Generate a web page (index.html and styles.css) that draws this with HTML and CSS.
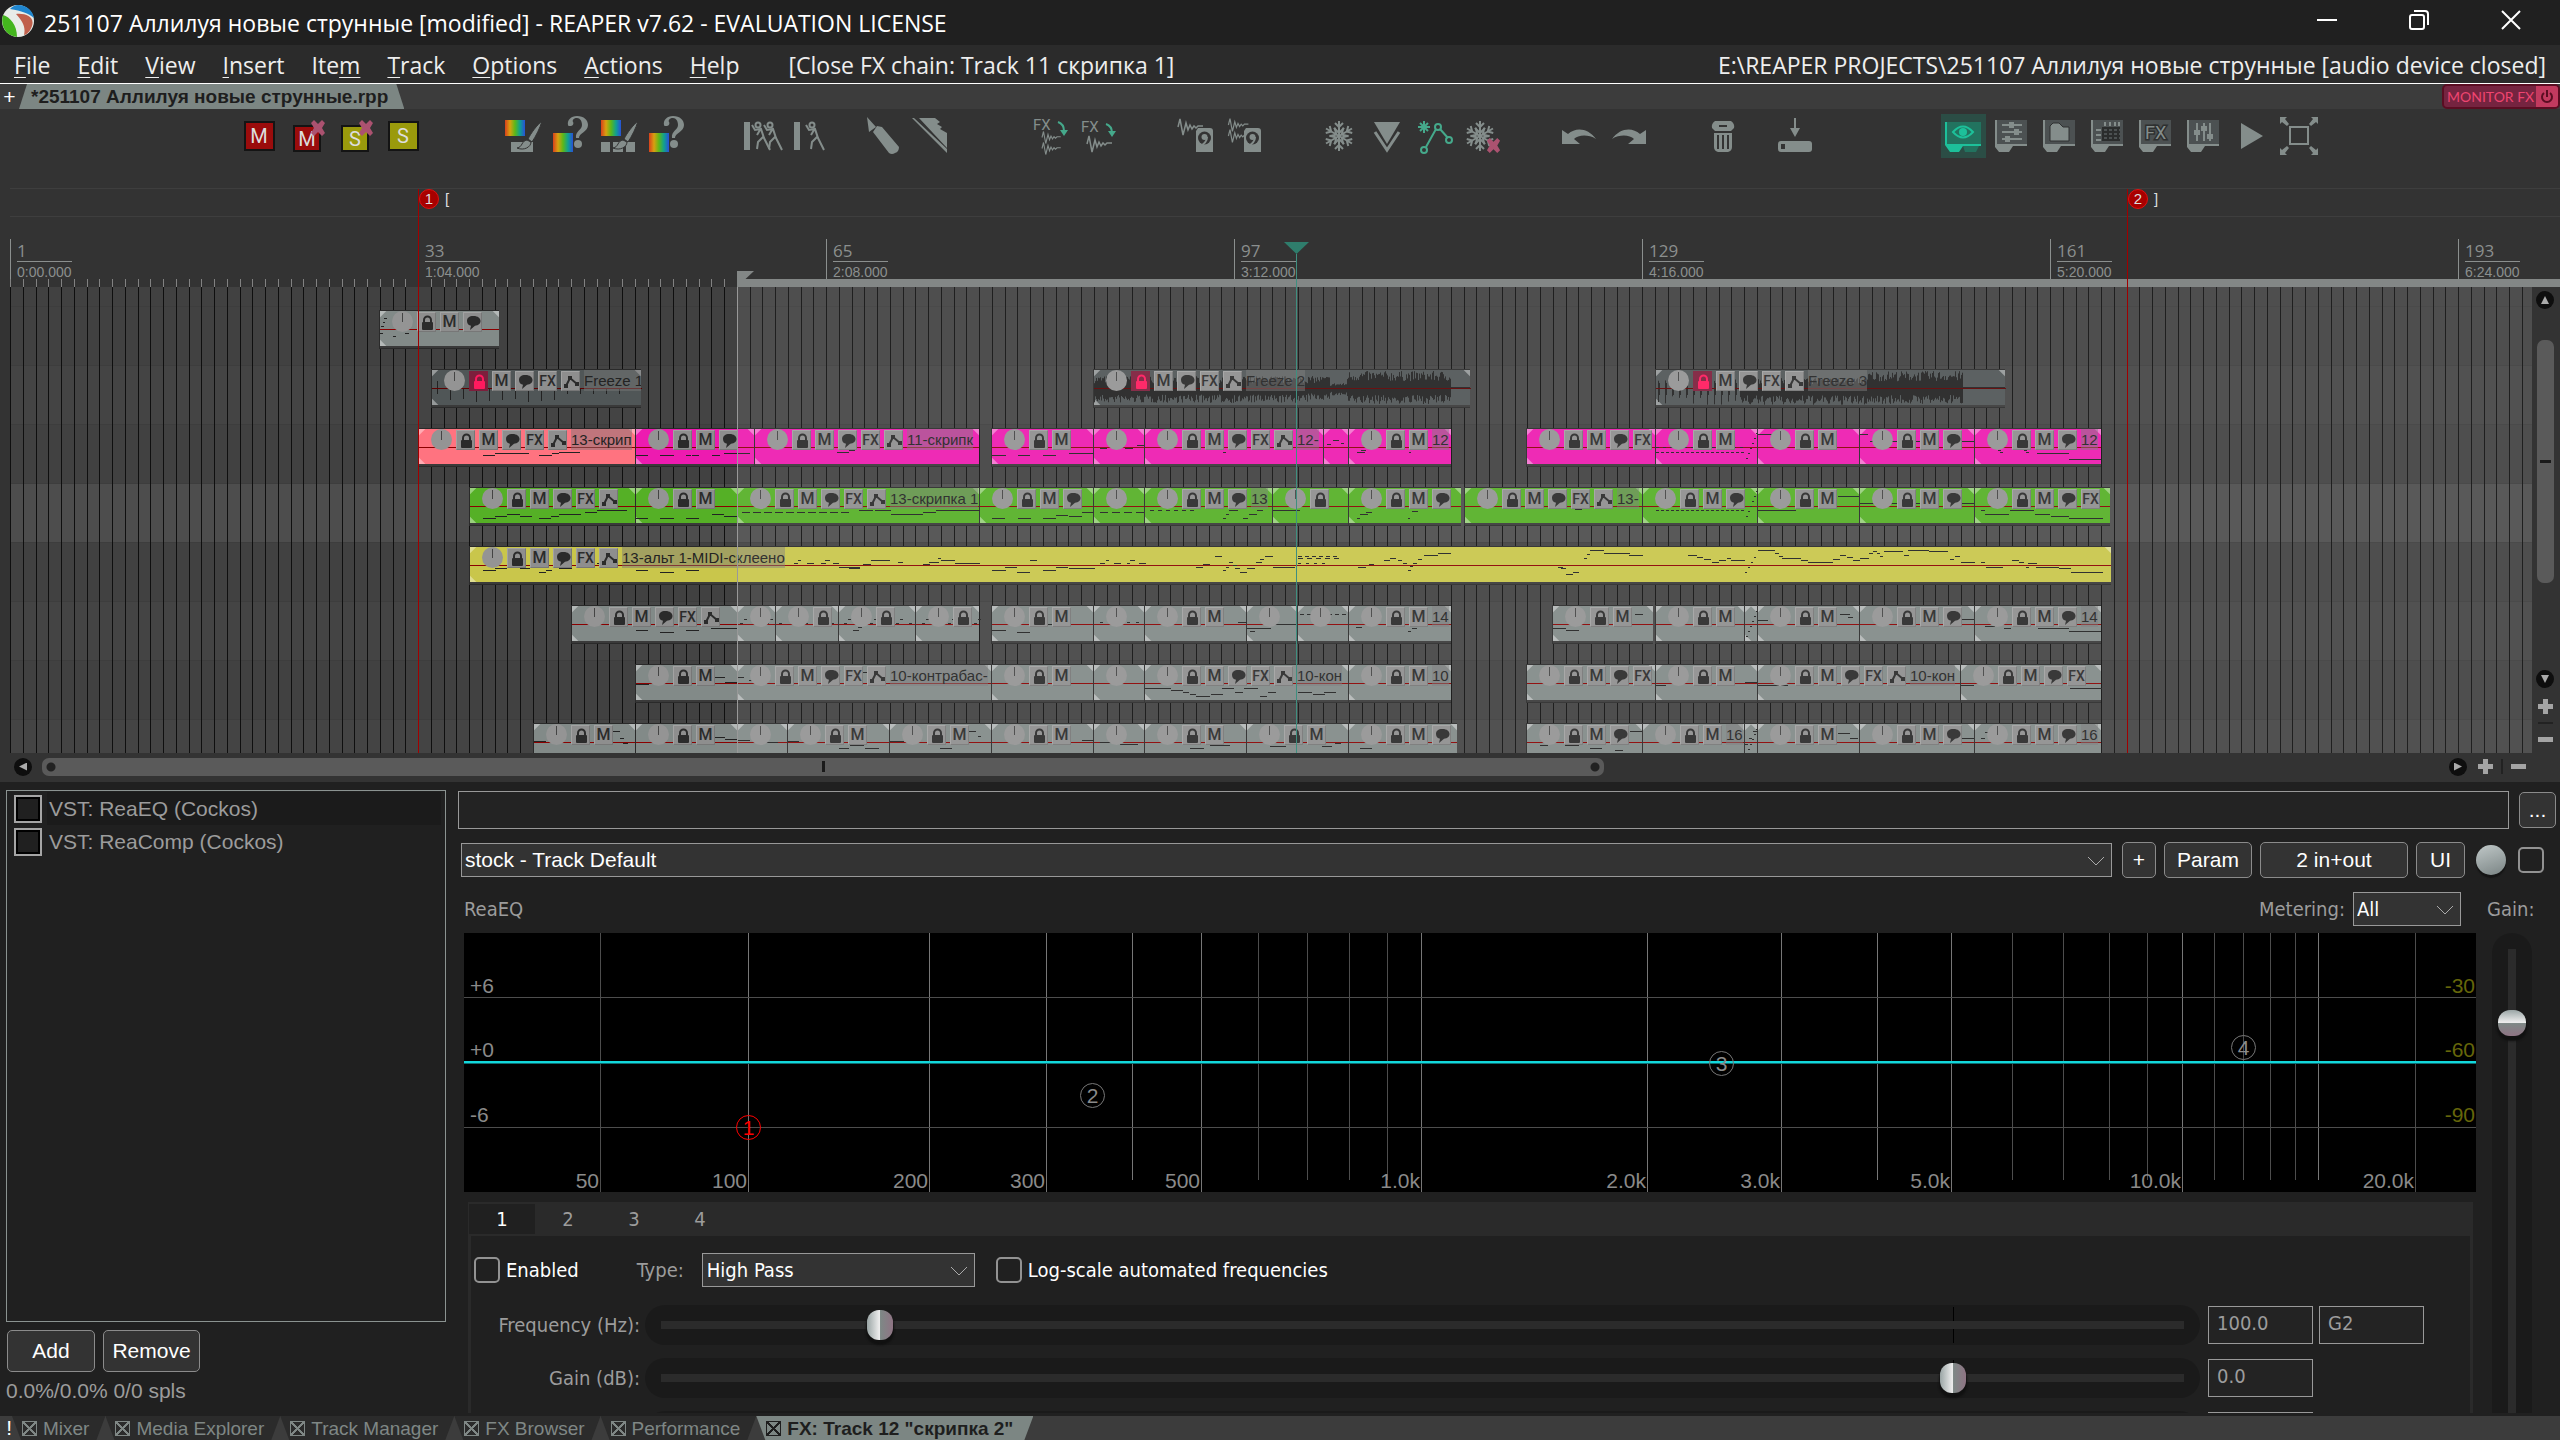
FILE: index.html
```html
<!DOCTYPE html>
<html lang="en">
<head>
<meta charset="utf-8">
<title>251107 Аллилуя новые струнные [modified] - REAPER v7.62 - EVALUATION LICENSE</title>
<link rel="stylesheet" href="styles.css">
</head>
<body>
<svg class="defs" aria-hidden="true">
  <defs>
    <linearGradient id="rainbow"><stop offset="0" stop-color="#d8401c"/><stop offset=".25" stop-color="#d8a010"/><stop offset=".5" stop-color="#5cb818"/><stop offset=".75" stop-color="#10a090"/><stop offset="1" stop-color="#2850d8"/></linearGradient>
    <symbol id="lock" viewBox="0 0 19 20"><path d="M6 9V7a3.500 3.500 0 0 1 7 0v2" fill="none" stroke="currentColor" stroke-width="2"/><rect x="4" y="9" width="11" height="8" rx="1" fill="currentColor"/></symbol>
    <symbol id="bubble" viewBox="0 0 19 20"><path d="M9.500 3C5 3 3 5 3 8s2 4.500 4 4.800L6 17l5-4.200c3-.3 5.500-2 5.500-4.800S14 3 9.500 3z" fill="currentColor"/></symbol>
    <symbol id="env" viewBox="0 0 19 20"><path d="M4 14L8 6l7 6" fill="none" stroke="currentColor" stroke-width="2"/><rect x="2" y="12" width="4" height="4" fill="currentColor"/><rect x="6" y="4" width="4" height="4" fill="currentColor"/><rect x="13" y="10" width="4" height="4" fill="currentColor"/></symbol>
    <symbol id="brush" viewBox="0 0 48 48"><path d="M43 9c-5 4-11 12-14 18l4 3c4-6 8-14 10-21z"/><path d="M28 28c-6 1-4 7-10 8 7 3 14-1 14-6z"/></symbol>
    <symbol id="snow" viewBox="0 0 48 48"><g fill="none" stroke="currentColor" stroke-width="2"><g id="arm"><path d="M24 24V9M20 11l4 4 4-4M19 16l5 5 5-5"/></g><use href="#arm" transform="rotate(60 24 24)"/><use href="#arm" transform="rotate(120 24 24)"/><use href="#arm" transform="rotate(180 24 24)"/><use href="#arm" transform="rotate(240 24 24)"/><use href="#arm" transform="rotate(300 24 24)"/></g></symbol>
    <symbol id="walker" viewBox="0 0 20 30"><g fill="none" stroke="currentColor" stroke-width="2"><circle cx="7" cy="4" r="2.500"/><path d="M1 4l3 5 6-1 3 9 6 12M12 16l-5 5-1 7M9 9l-3 5"/></g></symbol>
    <symbol id="wave" viewBox="0 0 26 20"><path d="M1 10l2-8 3 16 3-12 2 7 2-5 2 4 2-3 2 2 2-2h5" fill="none" stroke="currentColor" stroke-width="1.500"/></symbol>
    <symbol id="disk" viewBox="0 0 18 24"><path d="M3 0h12a3 3 0 0 1 3 3v21H1V3z" fill="currentColor"/><circle cx="9.500" cy="10" r="6.500" fill="#333"/><circle cx="9.500" cy="9" r="3" fill="currentColor"/><path d="M12 9c0 5-4 8-8 10" stroke="currentColor" stroke-width="2" fill="none"/></symbol>
    <symbol id="card" viewBox="0 0 48 48"><path d="M8 8h32v24H8z" fill="#4c5152"/><path d="M8 8h2v24H8z"/><path d="M8 32h32v2H26l-4 6H12l-4-5z"/></symbol>
    <symbol id="x" viewBox="0 0 16 16"><path d="M1 3l3-3 4 4 4-4 3 3-3 5 3 5-3 3-4-4-4 4-3-3 3-5z" fill="#ab5270"/></symbol>
    <symbol id="ask" viewBox="0 0 48 48"><path d="M21 17c-1-5 3-9 9-9 7 0 11 4 11 9 0 7-9 8-9 13h-3c-1-7 6-8 6-13 0-4-2-7-5-7s-5 2-4 4c1 1 0 4-2 4s-3 0-3-1z"/><circle cx="31" cy="36" r="4"/></symbol>
  </defs>
</svg>

<header class="titlebar">
  <svg class="logo" viewBox="0 0 32 32"><circle cx="16" cy="16" r="16" fill="#e8ece8"/><path d="M16 0A16 16 0 0 1 32 13C26 8 20 6 8 4 11 1 13 0 16 0z" fill="#1f86cf"/><path d="M14 9c10-1 19 3 16 12-2 6-6 9-8 9 2-9-2-14-8-21z" fill="#c0604c"/><path d="M1 10C8 12 15 20 15 32 4 31-2 21 1 10z" fill="#44b51e"/></svg>
  <h1>251107 Аллилуя новые струнные [modified] - REAPER v7.62 - EVALUATION LICENSE</h1>
  <div class="winbtns">
    <button aria-label="Minimize"><svg viewBox="0 0 20 20"><path d="M0 10h20"/></svg></button>
    <button aria-label="Restore"><svg viewBox="0 0 20 20"><rect x="1" y="5" width="14" height="14" rx="2"/><path d="M5 1h11q3 0 3 3v11"/></svg></button>
    <button aria-label="Close"><svg viewBox="0 0 20 20"><path d="M1 1l18 18M19 1L1 19"/></svg></button>
  </div>
</header>

<nav class="menubar">
  <a href="#"><u>F</u>ile</a><a href="#"><u>E</u>dit</a><a href="#"><u>V</u>iew</a><a href="#"><u>I</u>nsert</a><a href="#">Ite<u>m</u></a><a href="#"><u>T</u>rack</a><a href="#"><u>O</u>ptions</a><a href="#"><u>A</u>ctions</a><a href="#"><u>H</u>elp</a>
  <span class="last-action">[Close FX chain: Track 11 скрипка 1]</span>
  <span class="path">E:\REAPER PROJECTS\251107 Аллилуя новые струнные [audio device closed]</span>
</nav>

<div class="projects">
  <button class="plus">+</button>
  <button class="project">*251107 Аллилуя новые струнные.rpp</button>
  <button class="monitor">MONITOR FX<span><svg viewBox="0 0 16 16"><path d="M5 4a5 5 0 1 0 6 0M8 1v7" fill="none" stroke="#5a0d22" stroke-width="2"/></svg></span></button>
</div>

<div class="toolbar">
  <div class="group">
    <button class="ms"><b class="red">M</b></button>
    <button class="ms"><b class="red small">M</b><svg class="cross"><use href="#x"/></svg></button>
    <button class="ms"><b class="yel small">S</b><svg class="cross"><use href="#x"/></svg></button>
    <button class="ms"><b class="yel">S</b></button>
  </div>
  <div class="group g72">
    <button aria-label="Color items"><svg viewBox="0 0 48 48"><path d="M6 8h20v16H6z" fill="url(#rainbow)"/><path d="M12 30h22v10H12z"/><use href="#brush" stroke="#333" stroke-width="1"/></svg></button>
    <button aria-label="Random item color"><svg viewBox="0 0 48 48"><path d="M6 21h20v19H6z" fill="url(#rainbow)"/><use href="#ask" y="-4" width="48" height="48"/></svg></button>
    <button aria-label="Color tracks"><svg viewBox="0 0 48 48"><path d="M6 8h20v16H6z" fill="url(#rainbow)"/><path d="M6 30h9v10H6zm12 0h10v10H18zm13 0h9v10h-9z"/><use href="#brush" stroke="#333" stroke-width="1"/></svg></button>
    <button aria-label="Random track color"><svg viewBox="0 0 48 48"><path d="M6 21h20v19H6z" fill="url(#rainbow)"/><use href="#ask" y="-4" width="48" height="48"/></svg></button>
  </div>
  <div class="group g48">
    <button aria-label="Nudge all"><svg viewBox="0 0 48 48"><path d="M5 10h6v28H5z"/><use href="#walker" x="11" y="9" width="22" height="30"/><use href="#walker" x="23" y="9" width="22" height="30"/></svg></button>
    <button aria-label="Nudge"><svg viewBox="0 0 48 48"><path d="M7 10h6v28H7z"/><use href="#walker" x="16" y="9" width="24" height="30"/></svg></button>
  </div>
  <div class="group g24">
    <button aria-label="Draw"><svg viewBox="0 0 48 48"><path d="M8 5l9 10-7 5zM18 14l5 1 17 20q0 5-4 6-3 2-6 0L14 20z"/></svg></button>
    <button aria-label="Fade"><svg viewBox="0 0 48 48"><path d="M7 6l33 31v4L5 6zM12 6h16l5 4-3 2 5 3-2 2 7 4v15z"/></svg></button>
  </div>
  <div class="group g72">
    <button><svg viewBox="0 0 48 48"><text x="6" y="18" class="fxt">FX</text><path d="M31 10q6 2 6 9" fill="none" stroke="#45a98b" stroke-width="2"/><path d="M33 18h8l-4 6z" fill="#45a98b"/><use href="#wave" x="11" y="18" width="26" height="15"/><use href="#wave" x="11" y="29" width="26" height="15"/></svg></button>
    <button><svg viewBox="0 0 48 48"><text x="6" y="20" class="fxt">FX</text><path d="M31 12q6 2 6 9" fill="none" stroke="#45a98b" stroke-width="2"/><path d="M33 19h8l-4 6z" fill="#45a98b"/><use href="#wave" x="11" y="22" width="26" height="20"/></svg></button>
  </div>
  <div class="group g48">
    <button aria-label="Render item"><svg viewBox="0 0 48 48"><use href="#wave" x="6" y="5" width="26" height="20"/><use href="#disk" x="24" y="16" width="18" height="24"/></svg></button>
    <button aria-label="Render tracks"><svg viewBox="0 0 48 48"><use href="#wave" x="6" y="5" width="26" height="16"/><use href="#wave" x="6" y="16" width="26" height="16"/><use href="#disk" x="24" y="16" width="18" height="24"/></svg></button>
  </div>
  <div class="group g48">
    <button aria-label="Freeze"><svg><use href="#snow"/></svg></button>
    <button aria-label="Glue"><svg viewBox="0 0 48 48"><path d="M11 10h26L24 32z"/><path d="M12 20l12 18 12-18" fill="none" stroke="currentColor" stroke-width="3"/></svg></button>
    <button aria-label="Envelopes"><svg viewBox="0 0 48 48"><g fill="none" stroke="#45a98b" stroke-width="2"><path d="M13 9v12M7 15h12M9 11l8 8M17 11l-8 8M15 35l10-18M29 17l8 9"/><circle cx="13" cy="38" r="3"/><circle cx="27" cy="15" r="3"/><circle cx="38" cy="28" r="3"/></g></svg></button>
    <button aria-label="Unfreeze"><svg viewBox="0 0 48 48"><use href="#snow" x="-3" width="48" height="48"/><use href="#x" x="27" y="26" width="15" height="15"/></svg></button>
  </div>
  <div class="group g48">
    <button aria-label="Undo"><svg viewBox="0 0 48 48"><path d="M7 18l6 4c8-7 20-6 28 5-8-5-18-4-22 0l6 5H7z"/></svg></button>
    <button aria-label="Redo"><svg viewBox="0 0 48 48"><path d="M43 18l-6 4C29 15 17 16 9 27c8-5 18-4 22 0l-6 5h18z"/></svg></button>
  </div>
  <div class="group g48">
    <button aria-label="Delete"><svg viewBox="0 0 48 48"><path d="M16 9h16q4 3 3 7l-3 3H16l-3-3q-1-4 3-7z"/><path d="M20 14h8" stroke="#333" stroke-width="2"/><path d="M15 21h18v14q0 4-4 5H19q-4-1-4-5z"/><path d="M19 23v14M24 23v14M29 23v14" stroke="#333" stroke-width="2"/></svg></button>
  </div>
  <div class="group g24">
    <button aria-label="Save to disk"><svg viewBox="0 0 48 48"><path d="M23 6h2v10h4l-5 9-5-9h4z"/><path d="M10 29h28q3 0 3 3v5q0 3-3 3H10q-3 0-3-3v-5q0-3 3-3z"/><path d="M10 32h4v5h-4z" fill="#333"/></svg></button>
  </div>
  <div class="group g120">
    <button class="on" aria-label="Visibility"><svg viewBox="0 0 48 48"><path d="M8 10h34v22H8z" fill="#22735f"/><path d="M24 34h16l-3 6H26z" fill="#22735f"/><path d="M6 10h2v22h34v2H24l-4 6H11l-5-7z" fill="#1dc09a"/><path d="M14 20q10-11 20 0-10 11-20 0z" fill="none" stroke="#1dc09a" stroke-width="2"/><circle cx="24" cy="20" r="4" fill="#1dc09a"/></svg></button>
    <button aria-label="Routing"><svg viewBox="0 0 48 48"><use href="#card"/><path d="M15 13h20M15 20h20M15 27h20" stroke="currentColor" stroke-width="2"/><path d="M22 10h5v6h-5zm5 7h5v6h-5zm-9 7h5v6h-5z"/></svg></button>
    <button aria-label="Folder"><svg viewBox="0 0 48 48"><use href="#card"/><path d="M15 29V14l3-3h6l4 4h6v14z" stroke="#2e3030"/></svg></button>
    <button aria-label="Matrix"><svg viewBox="0 0 48 48"><use href="#card"/><path d="M20 15v14M25 15v14M30 15v14M35 15v14M19 16h18M19 20h18M19 24h18M19 28h18" stroke="#2b2d2d" stroke-width="2"/><path d="M22 10v4M27 10v4M32 10v4M36 10v4M13 18h5M13 23h5M13 28h5" stroke="currentColor" stroke-width="2"/></svg></button>
    <button><svg viewBox="0 0 48 48"><use href="#card"/><text x="14" y="27" class="fxc">FX</text></svg></button>
    <button aria-label="Mixer"><svg viewBox="0 0 48 48"><use href="#card"/><path d="M18 11v18M25 11v18M31 11v18" stroke="currentColor" stroke-width="2"/><path d="M15 18h6v5h-6zm7-4h6v5h-6zm6 8h6v5h-6z"/></svg></button>
    <button aria-label="Play"><svg viewBox="0 0 48 48"><path d="M14 11l22 13-22 13z"/></svg></button>
    <button aria-label="Full screen"><svg viewBox="0 0 48 48"><path d="M15 15h18v17H15z" fill="none" stroke="currentColor" stroke-width="2"/><path d="M5 5h7l-2 2 4 5-2 2-5-4-2 2zM43 5h-7l2 2-4 5 2 2 5-4 2 2zM5 43h7l-2-2 4-5-2-2-5 4-2-2zM43 43h-7l2-2-4-5 2-2 5 4 2-2z"/></svg></button>
  </div>
</div>

<main class="timeline">
  <div class="ruler" id="ruler"></div>
  <div class="arrange" id="arrange"></div>
  <div class="vscroll">
    <i class="knob up"></i><i class="vthumb"></i><i class="knob down"></i><i class="zoom plusz"></i><i class="rule"></i><i class="zoom"></i>
  </div>
  <div class="hscroll">
    <i class="knob left"></i><i class="hthumb"></i><i class="knob right"></i><i class="zoom plusz"></i><i class="vrule"></i><i class="zoom"></i>
  </div>
</main>

<section class="fx">
  <div class="chain">
    <div class="list">
      <label class="sel"><input type="checkbox"><span>VST: ReaEQ (Cockos)</span></label>
      <label><input type="checkbox"><span>VST: ReaComp (Cockos)</span></label>
    </div>
    <div class="chainbtns"><button class="btn add">Add</button><button class="btn">Remove</button></div>
    <p class="cpu">0.0%/0.0% 0/0 spls</p>
  </div>
  <div class="plugin">
    <div class="bar"><input type="text" class="comment" aria-label="FX comment"><button class="btn dots">...</button></div>
    <div class="bar presets">
      <select class="preset" aria-label="Preset"><option>stock - Track Default</option></select>
      <button class="btn pl">+</button><button class="btn param">Param</button><button class="btn io">2 in+out</button><button class="btn ui">UI</button>
      <i class="wet"></i><input type="checkbox" class="tick" aria-label="Enable">
    </div>
    <div class="bar head"><span class="name">ReaEQ</span><label for="met">Metering:</label><select id="met"><option>All</option></select><label for="master" class="gl">Gain:</label></div>
    <div class="eq">
      <div class="eqmain">
        <div class="graph" id="graph"></div>
        <div class="bands">
          <div class="tabs"><button class="cur">1</button><button>2</button><button>3</button><button>4</button></div>
          <div class="band">
            <div class="opts">
              <input type="checkbox" class="tick" id="en"><label for="en" class="w">Enabled</label>
              <label for="type" class="ty">Type:</label><select id="type"><option>High Pass</option></select>
              <input type="checkbox" class="tick" id="log"><label for="log" class="w">Log-scale automated frequencies</label>
            </div>
            <div class="prm"><label for="fr">Frequency (Hz):</label><span class="sl"><input type="range" id="fr" max="1000" value="145"></span><input type="text" value="100.0" aria-label="Frequency value"><input type="text" value="G2" aria-label="Note"></div>
            <div class="prm"><label for="ga">Gain (dB):</label><span class="sl"><input type="range" id="ga" max="1000" value="847"></span><input type="text" value="0.0" aria-label="Gain value"></div>
            <div class="prm"><label for="bw"></label><span class="sl"><input type="range" id="bw" max="1000" value="500"></span><input type="text" aria-label="Bandwidth value"></div>
          </div>
        </div>
      </div>
      <div class="master"><input type="range" id="master" max="1000" value="170"></div>
    </div>
  </div>
</section>

<footer class="dock">
  <span class="bang">!</span>
  <button><i></i>Mixer</button><button><i></i>Media Explorer</button><button><i></i>Track Manager</button><button><i></i>FX Browser</button><button><i></i>Performance</button><button class="active"><i></i>FX: Track 12 "скрипка 2"</button>
</footer>
<script src="app.js"></script>
</body>
</html>
```
FILE: styles.css
```css
* { box-sizing: border-box; }
html, body { height: 100%; }
body {
  margin: 0; display: flex; flex-direction: column; overflow: hidden;
  background: #202020; color: #fff;
  font: 21px/24px "Liberation Sans", Arial, sans-serif;
}
button { font: inherit; color: inherit; background: none; border: 0; padding: 0; margin: 0; }
input, select { margin: 0; font: inherit; color: inherit; border-radius: 0; }
i { font-style: normal; }
.defs { position: absolute; width: 0; height: 0; }

/* title and menu */
.titlebar { height: 45px; flex: none; display: flex; align-items: center; padding: 0 3px 0 2px; }
.logo { width: 32px; height: 32px; margin-bottom: 4px; }
.titlebar h1 { margin: 0 auto 0 10px; font: 23px/30px "Open Sans", "Noto Sans", sans-serif; }
.winbtns { display: flex; height: 42px; }
.winbtns button { width: 92px; }
.winbtns svg { width: 20px; height: 20px; fill: none; stroke: #fff; stroke-width: 2; }
.menubar {
  height: 39px; flex: none; display: flex; align-items: center; gap: 27px; padding: 2px 14px 0;
  background: #2b2b2b; border-bottom: 1px solid #fff; color: #eee; font: 23px/30px "Open Sans", "Noto Sans", sans-serif;
}
.menubar a { color: inherit; text-decoration: none; }
.menubar u { text-underline-offset: 3px; text-decoration-thickness: 1px; }
.last-action { margin-left: 22px; }
.path { margin-left: auto; }

.projects { height: 25px; flex: none; display: flex; background: #3c3c3c; }
.plus { width: 19px; line-height: 24px; }
.project {
  padding: 0 16px 0 12px; background: #7c8683; color: #1e1e1e; font-weight: bold; font-size: 19px; line-height: 25px;
  clip-path: polygon(8px 0, calc(100% - 8px) 0, 100% 100%, 0 100%);
}
.monitor {
  margin-left: auto; width: 118px; display: flex; align-items: center; padding-left: 3px; overflow: hidden;
  border: 2px solid #5a0d22; border-radius: 5px; background: #752440; color: #ef4470; font: 14px/20px "Lato", sans-serif;
  white-space: nowrap;
}
.monitor span { margin-left: auto; width: 22px; height: 22px; padding: 3px; background: #c23a5f; flex: none; }
.monitor svg { width: 16px; height: 16px; display: block; }

/* toolbar */
.toolbar { height: 66px; flex: none; display: flex; padding: 3px 0 0 235px; background: #333; color: #848d8b; }
.group { display: flex; }
.g24 { margin-left: 24px; } .g48 { margin-left: 48px; } .g72 { margin-left: 72px; } .g120 { margin-left: 120px; }
.toolbar button { width: 48px; height: 48px; position: relative; display: grid; place-items: center; }
.toolbar button > svg { width: 48px; height: 48px; fill: currentColor; display: block; }
.toolbar .on::before { content: ""; position: absolute; inset: 2px 1px 2px 2px; background: #2b4d45; }
.toolbar .on svg { position: relative; }
.ms b { width: 31px; height: 30px; border: 2px solid #141414; color: #ddd; font: 20px/26px "Roboto", sans-serif; }
.ms .small { width: 28px; height: 27px; line-height: 24px; align-self: end; margin-bottom: 8px; }
.red { background: #9b0c0c; } .yel { background: #9a9a0c; }
.toolbar button > .cross { position: absolute; width: 16px; height: 16px; left: 27px; top: 8px; }
.fxt { font: 15px "Roboto", sans-serif; }
.fxc { font: 18px "Roboto", sans-serif; stroke: #2e3030; paint-order: stroke; stroke-width: 3px; }

/* timeline */
.timeline {
  flex: none; display: grid; grid-template-columns: 1fr 28px; grid-template-rows: 112px 466px 29px;
  background: #333; overflow: hidden;
}
.ruler { grid-column: 1 / 3; position: relative; overflow: hidden; color: #8b8f8e; }
.ruler::before { content: ""; position: absolute; left: 10px; right: 0; top: 13px; height: 27px; border: solid #3e3e3e; border-width: 1px 0; }
.ruler::after {
  content: ""; position: absolute; left: 10px; right: 0; bottom: 0; height: 8px;
  --t: #828282; background: linear-gradient(90deg, var(--t) 1px, #0000 1px 13px, var(--t) 13px 14px, #0000 14px 26px, var(--t) 26px 27px, #0000 27px 38px, var(--t) 38px 39px, #0000 39px) 0 0 / 51px 8px;
}
.loop { position: absolute; z-index: 1; left: 737px; right: 0; bottom: 0; height: 8px; background: #838786; }
.loop::before { content: ""; position: absolute; left: 0; top: -8px; width: 17px; height: 8px; background: #838786; clip-path: polygon(0 0, 100% 0, 50% 100%, 0 100%); }
.mark { position: absolute; top: 64px; bottom: 0; padding-left: 6px; border-left: 1px solid #8b8f8e; }
.mark b { display: block; font: 17px/20px "Open Sans", sans-serif; padding-top: 2px; border-bottom: 1px solid #8b8f8e; }
.mark span { display: block; font-size: 14px; line-height: 21px; }
.pin { position: absolute; z-index: 2; top: 14px; bottom: 0; border-left: 1px solid #a00000; color: #ddd; font-size: 15px; line-height: 20px; white-space: pre; }
.pin i { display: inline-block; width: 20px; height: 20px; border-radius: 10px; background: #a80000; border: 1px solid #e01010; line-height: 17px; text-align: center; margin-right: 6px; }
.play { position: absolute; z-index: 3; top: 67px; left: 1284px; width: 25px; height: 45px; }

.arrange { position: relative; margin-left: 10px; overflow: hidden; background: #414141; }
.stripe { position: absolute; left: 0; right: 0; height: 59px; border-top: 1px solid #3d3d3d; }
.stripe.alt { background: #444; }
.stripe.picked { background: #4d4d4d; }
.grid { position: absolute; inset: 0; --t: #0f0f0f; background: linear-gradient(90deg, var(--t) 1px, #0000 1px 13px, var(--t) 13px 14px, #0000 14px 26px, var(--t) 26px 27px, #0000 27px 38px, var(--t) 38px 39px, #0000 39px) 0 0 / 51px 100%; }
.item {
  position: absolute; height: 39px; border: solid #2a2a2a; border-width: 1px 0 1px 1px;
  background:
    linear-gradient(135deg, #fff6 4px, #0000 5px) 0 0 / 8px 8px no-repeat,
    linear-gradient(225deg, #fff6 4px, #0000 5px) 100% 0 / 8px 8px no-repeat,
    linear-gradient(45deg, #fff6 4px, #0000 5px) 0 27px / 8px 8px no-repeat,
    linear-gradient(#8b0000, #8b0000) 0 18px / 100% 1px no-repeat,
    linear-gradient(var(--c), var(--c)) 0 0 / 100% 35px no-repeat,
    #3a3a3a;
}
.ctl { position: absolute; height: 24px; padding: 1px 0 0 13px; display: flex; align-items: flex-start; gap: 4px; overflow: hidden; color: #232323; }
.ctl > * { flex: none; }
.dial { width: 21px; height: 21px; border-radius: 50%; background: linear-gradient(#444, #444) 50% 2px / 1px 9px no-repeat #949494; }
.ctl button { width: 19px; height: 20px; margin-top: 1px; background: #8e8e8e; border: 1px solid #a2a2a2; border-right-color: #777; border-bottom-color: #777; font: 500 16px/18px "Roboto", sans-serif; color: #2b2b2b; display: grid; place-items: center; }
.ctl .fxb { font-size: 14px; }
.ctl svg { width: 19px; height: 20px; display: block; }
.ctl .locked { background: #7d1f3c; border-color: #7d1f3c; color: #ff1a5e; }
.ctl span { height: 21px; font-size: 15px; line-height: 22px; white-space: nowrap; background: #7777; }
.notes { position: absolute; left: -10px; top: 0; width: 2560px; height: 466px; fill: none; stroke: #222; stroke-width: 1; pointer-events: none; }
.selection { position: absolute; left: 727px; right: 0; top: 0; bottom: 0; background: #ffffff12; border-left: 1px solid #999; pointer-events: none; }
.vline { position: absolute; top: 0; bottom: 0; width: 1px; background: #a00000; }
.vline.cur { background: #3f8f80; }

.knob { width: 18px; height: 18px; border-radius: 9px; background: #0e0e0e; display: grid; place-items: center; flex: none; }
.knob::before { content: ""; width: 8px; height: 8px; background: #aaa; }
.up::before { clip-path: polygon(50% 0, 100% 100%, 0 100%); }
.down::before { clip-path: polygon(0 0, 100% 0, 50% 100%); }
.left::before { clip-path: polygon(100% 0, 100% 100%, 0 50%); }
.right::before { clip-path: polygon(0 0, 100% 50%, 0 100%); }
.vscroll { display: flex; flex-direction: column; align-items: center; padding: 4px 2px 0 0; }
.vthumb { width: 17px; height: 243px; margin: 31px 0 87px; border-radius: 7px; flex: none; background: linear-gradient(#1a1a1a, #1a1a1a) 50% 50% / 11px 3px no-repeat #5a5a5a; }
.zoom { width: 15px; height: 5px; background: #a4a4a4; position: relative; flex: none; }
.plusz::after { content: ""; position: absolute; left: 5px; top: -5px; width: 5px; height: 15px; background: #a4a4a4; }
.vscroll .plusz { margin-top: 16px; }
.rule { width: 15px; height: 2px; margin: 13px 0; background: #222; }
.hscroll { grid-column: 1 / 3; display: flex; align-items: center; padding: 0 34px 2px 14px; }
.hthumb { width: calc(62% + 5px); height: 18px; margin: 0 auto 0 10px; border-radius: 7px; background: radial-gradient(circle at 9px 9px, #222 4px, #0000 5px), radial-gradient(circle at calc(100% - 9px) 9px, #222 4px, #0000 5px), linear-gradient(#1a1a1a, #1a1a1a) 50% 50% / 3px 11px no-repeat, #5a5a5a; }
.hscroll .plusz { margin-left: 11px; }
.vrule { width: 2px; height: 15px; margin: 0 8px; background: #222; }

/* effect chain */
.fx { flex: 1; min-height: 0; display: flex; overflow: hidden; color: #9c9c9c; }
.chain { width: 452px; flex: none; padding: 8px 6px 0; display: flex; flex-direction: column; }
.list { flex: 1; border: 1px solid #8b9391; padding: 1px 2px; }
.list label { display: flex; height: 33px; align-items: center; gap: 5px; padding-left: 5px; }
.list span { flex: 1; height: 33px; line-height: 33px; padding-left: 2px; margin-right: 2px; }
.sel span { background: #1b1b1b; }
.list input { appearance: none; width: 28px; height: 28px; border: 2px solid #a5a5a5; background: #202020; box-shadow: inset 0 0 0 2px #000; }
.btn { height: 36px; border: 1px solid #8b8b8b; border-radius: 5px; background: #333; color: #fff; }
.chainbtns { display: flex; gap: 8px; padding: 8px 1px 0; }
.chainbtns .btn { height: 42px; width: 97px; }
.chainbtns .add { width: 88px; }
.cpu { margin: 7px 0 13px; }

.plugin { flex: 1; min-width: 0; padding: 9px 4px 3px 6px; display: flex; flex-direction: column; font-family: "DejaVu Sans Condensed", "DejaVu Sans", sans-serif; font-size: 20px; }
.bar { display: flex; align-items: center; flex: none; font: 21px/24px "Liberation Sans", sans-serif; }
.comment { flex: 1; height: 38px; background: #232323; border: 1px solid #999; margin-right: 10px; }
.dots { width: 37px; }
.presets { margin: 13px 12px 0 3px; }
select { appearance: none; height: 34px; padding: 0 6px; color: #fff; border: 1px solid #999; background: #333; outline: 0;
  background-image: linear-gradient(45deg, #0000 8px, #aaa 8px 9px, #0000 9px), linear-gradient(-45deg, #0000 8px, #aaa 8px 9px, #0000 9px);
  background-size: 8px 14px, 8px 14px; background-position: calc(100% - 15px) 11px, calc(100% - 7px) 11px; background-repeat: no-repeat; }
.preset { flex: 1; padding: 0 3px; }
.pl { width: 34px; margin: 0 8px 0 10px; }
.param { width: 88px; margin-right: 8px; }
.io { width: 148px; margin-right: 8px; }
.ui { width: 49px; margin-right: 11px; }
.wet { width: 30px; height: 30px; border-radius: 15px; background: linear-gradient(160deg, #c0c8c8, #7a8484); margin-right: 12px; box-shadow: 0 3px 1px #151515; }
.tick { appearance: none; width: 26px; height: 26px; border: 2px solid #929292; border-radius: 5px; background: #202020; flex: none; }
.head { margin-top: 14px; height: 34px; padding-left: 6px; font-family: "DejaVu Sans Condensed", sans-serif; font-size: 20px; }
.name { margin-right: auto; }
.head select { width: 108px; margin: 0 26px 0 8px; padding: 0 3px; }
.gl { width: 69px; }
.eq { flex: 1; min-height: 0; display: flex; padding-left: 6px; margin-top: 7px; }
.eqmain { flex: 1; min-width: 0; display: flex; flex-direction: column; overflow: hidden; }
.graph { position: relative; height: 259px; flex: none; background: #000; overflow: hidden; font: 21px/24px "Liberation Sans", sans-serif; color: #8a8a8a; }
.graph > * { position: absolute; }
.gv { top: 0; bottom: 0; width: 1px; background: #4d4d4d; }
.gv.short { bottom: 12px; }
.gv.hi { background: #777; }
.gh { left: 0; right: 0; height: 1px; background: #4d4d4d; }
.zero { left: 0; right: 0; top: 128px; height: 3px; background: #12d8dc; border-bottom: 1px solid #0a6f72; }
.fl { bottom: -1px; transform: translateX(-100%); padding-right: 1px; }
.dl { left: 6px; } .dr { right: 1px; color: #66660a; }
.node { width: 25px; height: 25px; margin: -12px; border: 1px solid #777; border-radius: 50%; text-align: center; line-height: 24px; }
.node.n1 { color: #f00; border-color: #f00; }
.bands { margin: 10px 3px 0 4px; flex: 1; min-height: 0; display: flex; flex-direction: column; }
.tabs { height: 34px; flex: none; display: flex; background: #2a2a2a; padding: 2px 1px; }
.tabs button { width: 66px; }
.tabs .cur { background: #202020; color: #fff; }
.band { flex: 1; min-height: 0; overflow: hidden; border: solid #2a2a2a; border-width: 0 3px; padding: 17px 40px 0 3px; }
.opts { display: flex; align-items: center; height: 34px; margin-bottom: 18px; }
.opts .w { color: #fff; margin-left: 6px; }
.ty { margin: 0 18px 0 58px; }
#type { width: 273px; margin-right: 21px; padding: 0 4px; }
.prm { display: flex; align-items: center; height: 40px; margin-bottom: 13px; }
.prm label { width: 166px; margin-right: 5px; text-align: right; white-space: nowrap; }
.prm input[type=text] { width: 105px; height: 38px; padding: 0 8px 4px; margin-right: 6px; background: #232323; border: 1px solid #999; }
.prm input[type=text]:nth-child(3):last-child { margin-right: 117px; }
.sl { flex: 1; height: 40px; margin-right: 8px; border-radius: 20px; display: flex;
  background: linear-gradient(#000, #000) 84.2% 50% / 1px 36px no-repeat, #1a1a1a; }
.sl input { appearance: none; width: 100%; height: 40px; background: linear-gradient(#2b2b2b, #2b2b2b) 50% 50% / calc(100% - 32px) 8px no-repeat; }
::-webkit-slider-thumb { appearance: none; width: 26px; height: 30px; border-radius: 12px; background: linear-gradient(90deg, #9aa5a5, #eee 48%, #7e8886 52%, #8f7484); box-shadow: 0 4px 2px 1px #111; }
.master { width: 80px; flex: none; padding-left: 16px; overflow: hidden; }
.master input { appearance: none; writing-mode: vertical-lr; width: 40px; height: 100%; border-radius: 20px 20px 0 0; background: linear-gradient(#2b2b2b, #2b2b2b) 50% 16px / 8px 100% no-repeat #1a1a1a; }
.master input::-webkit-slider-thumb { width: 28px; height: 26px; background: linear-gradient(#9aa5a5, #eee 48%, #7e8886 52%, #8f7484); }

.dock { height: 24px; flex: none; display: flex; background: #3c3c3c; color: #7f8785; overflow: hidden; }
.bang { color: #fff; width: 12px; text-align: right; }
.dock button { display: flex; align-items: center; gap: 6px; padding: 0 16px 0 10px; background: #2b2b2b; clip-path: polygon(0 0, 100% 0, calc(100% - 9px) 100%, 9px 100%); font-size: 19px; line-height: 25px; }
.dock i { width: 15px; height: 15px; border: 1px solid currentColor; background: linear-gradient(45deg, #0000 46%, currentColor 46% 54%, #0000 54%), linear-gradient(-45deg, #0000 46%, currentColor 46% 54%, #0000 54%); }
.dock .active { background: #7c8683; color: #1e1e1e; font-weight: bold; padding-right: 20px; }
```
FILE: app.js
```js
/* ruler */
const ruler = document.getElementById('ruler');
const marks = [[1, '0:00.000'], [33, '1:04.000'], [65, '2:08.000'], [97, '3:12.000'], [129, '4:16.000'], [161, '5:20.000'], [193, '6:24.000']];
ruler.innerHTML = marks.map(([m, t]) => `<div class="mark" style="left:${10 + (m - 1) * 51 / 4}px"><b>${m}</b><span>${t}</span></div>`).join('')
  + '<div class="loop"></div><div class="pin" style="left:418px"><i>1</i>[</div><div class="pin" style="left:2127px"><i>2</i>]</div>'
  + '<svg class="play" viewBox="0 0 25 45"><path d="M0 0h25L12.500 12z" fill="#2f7d6c"/><path d="M12.500 12v33" stroke="#3f8f80"/></svg>';

/* items: start, end, controls, label */
const G = '#828a88', P = '#ed1bb0', N = '#55b026', Y = '#c9c64b', F = '#505657';
const lanes = [
  [G, [380, 500, 'klMb']],
  [F, [432, 642, 'kLMbFe', 'Freeze 1'], [1094, 1471, 'kLMbFe', 'Freeze 2'], [1656, 2006, 'kLMbFe', 'Freeze 3']],
  [P, [419, 636, 'klMbFe', '13-скрип', '#ff7380'], [636, 755, 'klMb'], [755, 980, 'klMbFe', '11-скрипк'], [992, 1094, 'klM'], [1094, 1145, 'k'], [1145, 1324, 'klMbFe', '12-'], [1324, 1349, ''], [1349, 1452, 'klM', '12'], [1527, 1656, 'klMbF'], [1656, 1758, 'klM'], [1758, 1860, 'klM'], [1860, 1975, 'klMb'], [1975, 2102, 'klMb', '12']],
  [N, [470, 636, 'klMbFe'], [636, 738, 'klM'], [738, 980, 'klMbFe', '13-скрипка 1'], [980, 1094, 'klMb'], [1094, 1145, 'k'], [1145, 1273, 'klMb', '13'], [1273, 1349, 'kl'], [1349, 1462, 'klMb'], [1465, 1643, 'klMbFe', '13-'], [1643, 1758, 'klMb'], [1758, 1860, 'klM'], [1860, 1975, 'klMb'], [1975, 2111, 'klMbF']],
  [Y, [470, 2112, 'klMbFe', '13-альт 1-MIDI-склеено']],
  [G, [572, 738, 'klMbFe'], [738, 776, 'k'], [776, 839, 'kl'], [839, 916, 'kl'], [916, 980, 'kl'], [992, 1094, 'klM'], [1094, 1145, 'k'], [1145, 1247, 'klM'], [1247, 1298, 'k'], [1298, 1349, 'k'], [1349, 1452, 'klM', '14'], [1553, 1654, 'klM'], [1656, 1745, 'klM'], [1745, 1758, ''], [1758, 1860, 'klM'], [1860, 1975, 'klMb'], [1975, 2102, 'klMb', '14']],
  [G, [636, 738, 'klM'], [738, 992, 'klMbFe', '10-контрабас-'], [992, 1094, 'klM'], [1094, 1145, 'k'], [1145, 1349, 'klMbFe', '10-кон'], [1349, 1452, 'klM', '10'], [1527, 1656, 'klMbF'], [1656, 1758, 'klM'], [1758, 1961, 'klMbFe', '10-кон'], [1961, 2102, 'klMbF']],
  [G, [534, 636, 'klM'], [636, 738, 'klM'], [738, 788, 'k'], [788, 890, 'klM'], [890, 992, 'klM'], [992, 1094, 'klM'], [1094, 1145, 'k'], [1145, 1247, 'klM'], [1247, 1349, 'klM'], [1349, 1458, 'klMb'], [1527, 1643, 'klMb'], [1643, 1745, 'klM', '16'], [1745, 1758, ''], [1758, 1860, 'klM'], [1860, 1975, 'klMb'], [1975, 2102, 'klMb', '16']]
];
const icon = id => `<svg><use href="#${id}"/></svg>`;
const parts = {
  k: '<i class="dial"></i>',
  l: `<button aria-label="Lock">${icon('lock')}</button>`,
  L: `<button class="locked" aria-label="Locked">${icon('lock')}</button>`,
  M: '<button>M</button>',
  b: `<button aria-label="Notes">${icon('bubble')}</button>`,
  F: '<button class="fxb">FX</button>',
  e: `<button aria-label="Envelope">${icon('env')}</button>`
};
let html = '', controls = '';
lanes.forEach((l, r) => { html += `<div class="stripe${r === 3 ? ' picked' : r % 2 ? ' alt' : ''}" style="top:${19 + r * 59}px"></div>`; });
html += '<div class="grid"></div>';
lanes.forEach(([color, ...items], r) => {
  for (const [a, b, keys, label, own] of items) {
    const box = `left:${a - 11}px;width:${b - a}px;top:${23 + r * 59}px`;
    html += `<div class="item" style="${box};--c:${own || color}"></div>`;
    if (keys) controls += `<div class="ctl" style="${box}">` + [...keys].map(k => parts[k]).join('') + (label ? `<span>${label}</span>` : '') + '</div>';
  }
});

/* note strokes: x, y, length in timeline coordinates */
const notes = [
  384,318,3, 383,322,2, 381,326,3, 380,333,3, 393,336,3, 405,333,4,
  483,455,12, 495,453,34, 539,455,13, 552,453,7, 559,452,21, 636,455,12, 660,455,14, 686,455,5, 692,455,7, 712,455,8, 724,453,26,
  837,452,12, 849,450,6, 992,455,14, 1018,455,12, 1043,455,13, 1069,453,25, 1100,448,7, 1112,446,8, 1125,448,8, 1137,445,7, 1223,452,3, 1327,444,4, 1333,440,6, 1341,443,3, 1357,452,8, 1361,450,5, 1409,452,2,
  1545,448,4, 1758,434,19, 1860,434,8, 1870,441,60, 1962,441,12, 1998,450,3, 2000,452,3, 2024,450,3, 2026,452,3, 2037,453,32, 2069,459,32,
  483,518,13, 495,516,12, 507,514,13, 520,516,12, 539,518,12, 551,516,8, 559,514,22, 585,512,12, 597,510,30, 636,518,12, 660,518,14, 686,518,13, 712,514,12, 724,516,14,
  859,510,14, 875,510,16, 891,514,32, 923,512,13, 936,510,44, 992,518,13, 1018,518,13, 1043,518,13, 1056,515,12, 1069,516,13, 1082,512,12, 1223,518,3, 1226,514,3, 1229,510,9, 1243,518,5, 1249,514,8, 1257,510,6, 1273,510,27, 1357,518,3, 1360,514,8, 1366,512,6, 1408,518,2, 1412,511,6, 1575,509,7,
  1758,510,38, 1838,496,21, 1860,503,18, 1880,503,50, 1962,503,12, 1981,510,4, 1985,514,24, 2010,510,24, 2035,514,15, 2051,516,18, 2069,518,34,
  483,570,13, 495,568,12, 520,568,10, 539,572,7, 546,570,6, 559,568,13, 597,563,7, 636,570,12, 660,572,14, 686,570,13,
  794,563,4, 798,560,3, 807,563,7, 821,563,5, 825,560,5, 833,563,6, 839,567,21, 849,568,11, 863,564,8, 871,560,19, 898,562,5, 923,564,7, 929,562,10, 938,558,3, 941,560,14, 955,563,25, 992,570,14, 1005,567,12, 1017,572,13, 1030,560,7, 1043,570,13, 1056,567,12, 1069,568,26, 1100,563,5, 1106,560,3, 1114,563,7, 1127,563,3, 1130,560,5, 1139,563,7,
  1196,567,7, 1203,564,7, 1215,556,7, 1223,570,3, 1226,567,3, 1229,562,4, 1233,565,4, 1235,568,5, 1240,572,7, 1247,568,8, 1256,562,6, 1260,559,4, 1265,556,8, 1273,567,22, 1358,567,8, 1369,564,5, 1384,560,6, 1390,558,6, 1398,560,4, 1403,563,4, 1408,570,3, 1410,566,3, 1413,563,4, 1418,559,4, 1424,555,14, 1438,553,13,
  1558,567,5, 1561,568,5, 1566,574,7, 1573,572,6, 1584,558,3, 1587,554,3, 1590,550,14, 1604,553,26, 1629,555,14, 1688,555,9, 1697,557,6, 1704,559,7, 1712,562,7, 1719,560,7, 1727,558,4, 1731,560,14, 1745,572,2, 1748,567,2, 1751,562,2, 1754,557,2, 1758,550,17, 1775,553,4, 1779,556,4, 1782,558,19, 1801,560,7, 1808,562,25, 1833,559,7, 1840,555,6, 1847,557,6, 1853,560,7, 1860,558,9, 1869,553,4, 1873,551,4, 1877,553,3, 1880,556,3, 1884,551,19, 1904,555,5, 1908,550,21, 1929,551,19, 1950,559,4, 1955,556,5, 1961,562,14, 1981,562,4, 1986,567,17, 2012,560,7, 2019,562,5, 2026,567,3, 2028,563,9, 2036,567,23, 2059,568,12, 2071,572,32,
  636,630,12, 660,632,14, 686,630,13, 711,628,26, 853,630,6, 858,627,4, 992,630,14, 1017,632,13, 1043,624,12, 1238,622,9, 1247,628,24, 1272,624,24, 1250,631,5, 1356,627,6, 1408,631,3, 1412,628,5, 1553,628,13, 1566,630,13, 1635,614,8, 1758,620,10, 1840,614,10, 1848,617,5, 1962,619,12, 1985,626,10, 2004,628,7, 2038,628,31, 2069,631,32,
  636,684,13, 715,677,10, 725,682,12, 738,677,6, 749,680,5, 850,672,20, 1145,688,26, 1171,690,12, 1183,692,6, 1190,694,6, 1196,696,14, 1211,694,12, 1222,688,12, 1235,692,8, 1244,688,14, 1260,696,7, 1268,692,8, 1298,692,14, 1313,694,12, 1324,692,12, 1656,685,10, 1745,682,12, 1758,685,30, 1961,685,13, 2070,688,32,
  534,741,12, 612,731,8, 620,738,4, 623,743,5, 715,737,10, 725,739,13, 738,740,12, 763,742,15, 788,741,11, 839,748,10, 850,745,14, 865,748,14, 890,741,14, 940,748,12, 968,731,8, 978,736,3, 1082,740,12, 1100,742,14, 1120,744,18, 1190,748,14, 1210,745,20, 1270,746,16, 1322,746,10, 1335,743,6, 1360,748,12, 1540,745,8, 1565,745,14, 1590,748,12, 1615,750,8, 1630,731,12, 1745,744,3, 1749,738,3, 1753,731,5, 1838,733,12, 1850,738,8, 1962,738,12, 1981,738,4, 1985,732,4
];
let d = '';
for (let i = 0; i < notes.length; i += 3) d += `M${notes[i]} ${notes[i + 1] - 286.5}h${notes[i + 2]}`;
const run = (a, b, y, step, w) => { for (let x = a; x < b; x += step) d += `M${x} ${y - 286.5}h${w}`; };
run(742, 852, 512, 11, 8);
run(1100, 1145, 512, 12, 8);
run(1150, 1195, 510, 8, 4);
run(1656, 1745, 452, 5, 3); run(1656, 1745, 447, 7, 3); run(1656, 1745, 510, 5, 3);
run(1298, 1338, 556, 7, 4); run(1298, 1338, 558, 9, 5); run(1298, 1330, 563, 8, 3);
run(740, 980, 623, 13, 3); run(744, 980, 619, 26, 3); run(1100, 1145, 622, 9, 3); run(1300, 1345, 614, 7, 4);
for (const top of [434, 492, 612, 730]) for (let i = 0; i < 6; i++) d += `M${1746 + i * 2} ${top + 24 - i * 5 - 286.5}h2`;

/* frozen audio waveforms */
let seed = 7;
const rnd = () => (seed = (seed * 16807) % 2147483647) / 2147483647;
let w = '';
const wave = (a, b, up, down) => { for (let x = a; x < b; x++) w += `M${x + .5} ${101 - up * (.4 + .6 * rnd())}V${102 + down * (.4 + .6 * rnd())}`; };
for (let x = 437; x < 620; x += 13) w += `M${x}.5 ${x < 445 ? 94 : 101}v${x < 560 ? 14 - (x % 4) : 6}`;
wave(1094, 1308, 12, 14); wave(1308, 1330, 12, 11); wave(1330, 1347, 5, 7); wave(1347, 1451, 17, 15);
for (let x = 1658; x < 1740; x += 7) w += `M${x}.5 ${88 + rnd() * 8}V${106 + rnd() * 12}M${x + 1}.5 96V108`;
wave(1740, 1868, 10, 16); wave(1868, 1963, 17, 15);
w += 'M1451 100.500h19M1963 100.500h42';
html += `<svg class="notes"><path d="${d}"/><path d="${w}"/><path d="M432 101.500h210M1094 101.500h377M1656 101.500h350" stroke="#5e0000"/></svg>` + controls
  + '<div class="selection"></div><div class="vline" style="left:408px"></div><div class="vline" style="left:2117px"></div><div class="vline cur" style="left:1286px"></div>';
document.getElementById('arrange').innerHTML = html;

/* frequency response */
const pc = x => (x - 464) / 2012 * 100 + '%';
const lines = [[600, '50', 1], [748, '100', 2], [929, '200', 2], [1046, '300', 2], [1132, '', 2], [1201, '500', 2], [1258], [1307], [1349], [1387], [1421, '1.0k', 2], [1647, '2.0k', 2], [1781, '3.0k', 2], [1877, '', 2], [1951, '5.0k', 2], [2012], [2063], [2109], [2147], [2182, '10.0k', 2], [2214], [2243], [2270], [2295], [2318, '', 2], [2415, '20.0k', 1]];
document.getElementById('graph').innerHTML =
  lines.map(([x, t, h]) => `<i class="gv${t ? '' : ' short'}${h === 2 ? ' hi' : ''}" style="left:${pc(x)}"></i>` + (t ? `<span class="fl" style="left:${pc(x)}">${t}</span>` : '')).join('')
  + [64, 194].map(y => `<i class="gh" style="top:${y}px"></i>`).join('') + '<i class="zero"></i>'
  + [['+6', '-30', 41], ['+0', '-60', 105], ['-6', '-90', 170]].map(([l, r, y]) => `<span class="dl" style="top:${y}px">${l}</span><span class="dr" style="top:${y}px">${r}</span>`).join('')
  + [[748, 194], [1092, 162], [1721, 130], [2243, 114]].map(([x, y], i) => `<i class="node n${i + 1}" style="left:${pc(x)};top:${y}px">${i + 1}</i>`).join('');
```
